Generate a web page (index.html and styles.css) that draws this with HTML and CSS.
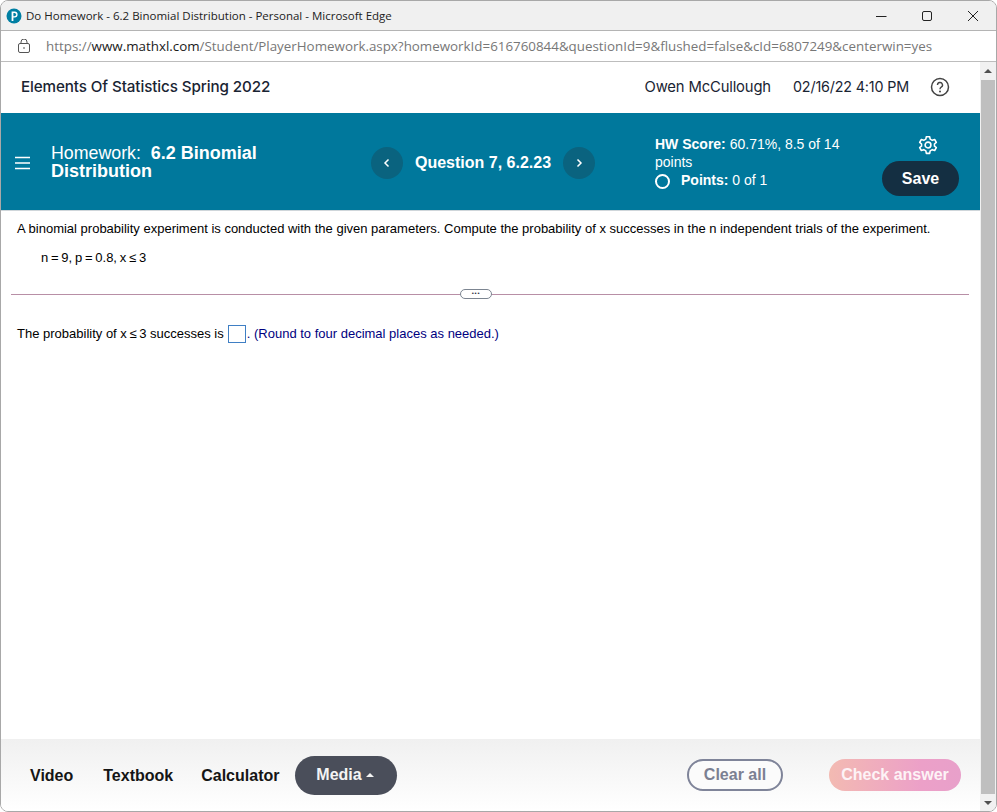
FILE: index.html
```html
<!DOCTYPE html>
<html lang="en">
<head>
<meta charset="utf-8">
<title>Do Homework - 6.2 Binomial Distribution</title>
<link rel="stylesheet" href="styles.css">
</head>
<body>
<div class="window">
  <div class="titlebar">
    <svg class="favicon" width="16" height="16" viewBox="0 0 16 16"><circle cx="8" cy="8" r="7.5" fill="#007fa3"/><path d="M5.6 13V3.6h3a3 3 0 0 1 0 6H7.4V13z" fill="#fff"/><path d="M7.4 5v3.2h1.1a1.6 1.6 0 0 0 0-3.2z" fill="#007fa3"/></svg>
    <span class="wintitle">Do Homework - 6.2 Binomial Distribution - Personal - Microsoft Edge</span>
    <div class="wincontrols">
      <svg width="12" height="12" viewBox="0 0 12 12"><path d="M1 6.5h10.500" stroke="#222" fill="none"/></svg>
      <svg width="12" height="12" viewBox="0 0 12 12"><rect x="1.500" y="1.500" width="9" height="9" rx="1.500" stroke="#222" fill="none"/></svg>
      <svg width="12" height="12" viewBox="0 0 12 12"><path d="M1 1l10 10M11 1L1 11" stroke="#222" fill="none"/></svg>
    </div>
  </div>
  <div class="addressbar">
    <svg class="lock" width="12" height="14" viewBox="0 0 12 14"><rect x="0.500" y="4.500" width="11" height="9" rx="1.500" stroke="#555" fill="none"/><path d="M3 4.500V3a3 3 0 0 1 6 0v1.500" stroke="#555" fill="none"/><rect x="5.300" y="8.300" width="1.400" height="1.400" fill="#555"/></svg>
    <span class="url">https://<b>www.mathxl.com</b>/Student/PlayerHomework.aspx?homeworkId=616760844&amp;questionId=9&amp;flushed=false&amp;cId=6807249&amp;centerwin=yes</span>
  </div>
  <div class="viewport">
    <div class="page">
      <header class="coursebar">
        <span class="course">Elements Of Statistics Spring 2022</span>
        <div class="coursemeta">
          <span class="owner">Owen McCullough</span>
          <span class="stamp">02/16/22 4:10 PM</span>
          <svg width="20" height="20" viewBox="0 0 20 20"><circle cx="10" cy="10" r="8.500" stroke="#444" stroke-width="1.500" fill="none"/><path d="M7.500 8a2.500 2.500 0 1 1 3.700 2.200c-.8.500-1.200 1-1.200 2" stroke="#444" stroke-width="1.400" fill="none"/><circle cx="10" cy="14.500" r="1" fill="#444"/></svg>
        </div>
      </header>
      <section class="banner">
        <svg class="menu" width="16" height="14" viewBox="0 0 16 14"><path d="M0 1.500h15M0 7h15M0 12.500h15" stroke="#fff" stroke-width="1.500" fill="none"/></svg>
        <h1 class="hwtitle">Homework:&nbsp; <b>6.2 Binomial Distribution</b></h1>
        <nav class="qnav">
          <button class="round" aria-label="Previous"><svg width="8" height="10" viewBox="0 0 8 10"><path d="M5.500 1.500L2 5l3.500 3.500" stroke="#fff" stroke-width="1.500" fill="none"/></svg></button>
          <span class="qlabel">Question 7, 6.2.23</span>
          <button class="round" aria-label="Next"><svg width="8" height="10" viewBox="0 0 8 10"><path d="M2.500 1.500L6 5 2.500 8.500" stroke="#fff" stroke-width="1.500" fill="none"/></svg></button>
        </nav>
        <div class="score">
          <div><b>HW Score:</b> 60.71%, 8.5 of 14 points</div>
          <div class="points"><span class="ring"></span><span><b>Points:</b> 0 of 1</span></div>
        </div>
        <div class="actions">
          <svg class="gear" width="20" height="20" viewBox="0 0 24 24" fill="none" stroke="#fff" stroke-width="1.900"><circle cx="12" cy="12" r="3.500"/><path d="M10 2h4l.6 3 2.500 1.400 2.900-1 2 3.400-2.300 2a8 8 0 0 1 0 2.400l2.300 2-2 3.400-2.900-1-2.500 1.400-.6 3h-4l-.6-3-2.500-1.400-2.900 1-2-3.400 2.300-2a8 8 0 0 1 0-2.400l-2.300-2 2-3.400 2.900 1L9.400 5z" stroke-linejoin="round"/></svg>
          <button class="save">Save</button>
        </div>
      </section>
      <main class="question">
        <p class="prompt">A binomial probability experiment is conducted with the given parameters. Compute the probability of x successes in the n independent trials of the experiment.</p>
        <p class="params">n = 9, p = 0.8, x ≤ 3</p>
        <div class="divider"><span class="dots">•••</span></div>
        <p class="answer"><span>The probability of <span class="expr">x ≤ 3</span> successes is</span><span class="box"></span><span class="hint">. (Round to four decimal places as needed.)</span></p>
      </main>
      <footer class="toolbar">
        <a class="tool first">Video</a>
        <a class="tool">Textbook</a>
        <a class="tool">Calculator</a>
        <button class="media">Media <i class="caret"></i></button>
        <button class="clear">Clear all</button>
        <button class="check">Check answer</button>
      </footer>
    </div>
    <div class="scrollbar">
      <i class="arrow up"></i>
      <div class="thumb"></div>
      <i class="arrow down"></i>
    </div>
  </div>
</div>
</body>
</html>
```

FILE: styles.css
```css
* { box-sizing: border-box; }
html, body { margin: 0; height: 100%; background: #fff; overflow: hidden; }
.window {
  width: 997px; height: 812px; display: flex; flex-direction: column;
  border: 1px solid #a8a8a8; border-radius: 8px; overflow: hidden; background: #fff;
  font-family: "Liberation Sans", Arial, sans-serif;
}
.titlebar {
  height: 30px; flex: none; background: #f0f0f0; border-bottom: 1px solid #b4b4b4;
  display: flex; align-items: center; padding-left: 5px;
}
.favicon { margin-right: 4px; }
.wintitle { font: 11.500px "Open Sans", sans-serif; color: #222; }
.wincontrols { margin-left: auto; display: flex; gap: 34px; padding-right: 17px; align-items: center; }
.addressbar {
  height: 31px; flex: none; border-bottom: 1px solid #bdbdbd; background: #fff;
  display: flex; align-items: center; padding-left: 17px;
}
.lock { margin-right: 16px; }
.url { font: 13.360px "Open Sans", sans-serif; color: #777; white-space: nowrap; }
.url b { font-weight: 400; color: #1a1a1a; }
.viewport { flex: 1; display: flex; min-height: 0; }
.page { flex: 1; display: flex; flex-direction: column; min-width: 0; }
.coursebar {
  height: 51px; flex: none; display: flex; align-items: center; justify-content: space-between;
  padding: 0 30px 2px 20px; color: #1a2433;
}
.course { font: 500 15.200px Inter, sans-serif; letter-spacing: -0.100px; }
.coursemeta { display: flex; align-items: center; gap: 22px; font-family: Inter, sans-serif; font-weight: 400; }
.owner { font-size: 14.800px; letter-spacing: -0.150px; }
.stamp { font-size: 14.300px; letter-spacing: -0.150px; margin-right: -1px; }
.banner {
  height: 98px; flex: none; background: #00789c; border-bottom: 1px solid #cfd6da; color: #fff;
  display: flex; align-items: center; position: relative;
}
.menu { margin-left: 14px; margin-top: 2px; flex: none; }
.hwtitle { margin: 0 0 0 20px; width: 320px; flex: none; font-size: 17.800px; line-height: 18px; font-weight: 400; padding-right: 40px; }
.hwtitle b { font-size: 18px; }
.qnav { display: flex; align-items: center; gap: 12px; width: 284px; flex: none; margin-top: 2px; }
.round {
  width: 32px; height: 32px; border-radius: 50%; border: 0; padding: 0; background: #0a637f;
  display: flex; align-items: center; justify-content: center; flex: none;
}
.qlabel { font-size: 16px; font-weight: 700; white-space: nowrap; }
.score { width: 200px; flex: none; font-size: 14px; line-height: 18px; }
.points { display: flex; gap: 11px; align-items: center; }
.ring { width: 15px; height: 15px; border: 2px solid #fff; border-radius: 50%; margin-top: 3px; flex: none; }
.actions { margin-left: auto; padding: 8px 21px 0 0; display: flex; flex-direction: column; align-items: center; gap: 6px; }
.gear { margin-left: 14px; }
.save {
  width: 77px; height: 35px; border-radius: 18px; border: 0; background: #142f42; color: #fff;
  font: 700 16px "Liberation Sans", sans-serif;
}
.question { flex: 1; font-size: 13px; color: #000; padding: 0 10px; min-height: 0; }
.question p { margin: 0; }
.prompt { padding: 10px 0 0 6px; line-height: 16px; white-space: nowrap; }
.params { padding: 13px 0 0 30px; line-height: 16px; word-spacing: -0.850px; }
.divider { margin-top: 28px; width: 958px; height: 1px; background: #b88fa6; position: relative; }
.dots {
  position: absolute; left: 449px; top: -5px; width: 32px; height: 10px; border: 1.500px solid #7c8591;
  border-radius: 5px; background: #fff; font-size: 6px; line-height: 7px; text-align: center; color: #334;
  letter-spacing: 0.800px;
}
.answer { padding: 30px 0 0 6px; line-height: 18px; white-space: nowrap; display: flex; align-items: center; gap: 4px; }
.expr { word-spacing: -1px; }
.box { width: 18px; height: 18px; border: 1px solid #3f7fc4; flex: none; }
.hint { color: #000080; margin-left: -3px; }
.toolbar {
  height: 72px; flex: none; background: linear-gradient(#f0f0f0, #fff); display: flex; align-items: center;
  padding: 1px 19px 0 29px; font-size: 16px; font-weight: 700; color: #151515;
}
.tool { margin-right: 29px; }
.first { margin-right: 30px; }
.first + .tool { margin-right: 28px; }
.media {
  height: 39px; width: 102px; margin: -1px 0 0 -13px; padding: 0 3px 0 0; border-radius: 20px; border: 0; background: #4a4e5a; color: #f4f4f4;
  font: 700 16px "Liberation Sans", sans-serif; display: flex; align-items: center; justify-content: center; gap: 4px;
}
.caret { width: 0; height: 0; border: 4px solid transparent; border-top: 0; border-bottom: 4px solid #f4f4f4; }
.clear {
  width: 96px; height: 32px; margin: -1px 0 0 auto; border-radius: 16px; border: 2px solid #7f8499; background: #fbfbfb;
  color: #7b8092; font: 700 16px "Liberation Sans", sans-serif; padding: 0;
}
.check {
  width: 132px; height: 32px; margin: -1px 0 0 46px; border-radius: 16px; border: 0; padding: 0; color: #fdf3f6;
  background: linear-gradient(90deg, #f3bab2, #eca0c8 70%, #e8a0ca); font: 700 16px "Liberation Sans", sans-serif;
}
.scrollbar { width: 16px; flex: none; background: #f1f1f1; display: flex; flex-direction: column; align-items: center; padding: 7px 1px 6px; }
.arrow { width: 0; height: 0; border: 4px solid transparent; flex: none; }
.arrow.up { border-top: 0; border-bottom: 4px solid #505050; }
.arrow.down { border-bottom: 0; border-top: 4px solid #505050; }
.thumb { width: 14px; flex: 1; background: #bfbfbf; margin: 7px 0 7px; }
```
